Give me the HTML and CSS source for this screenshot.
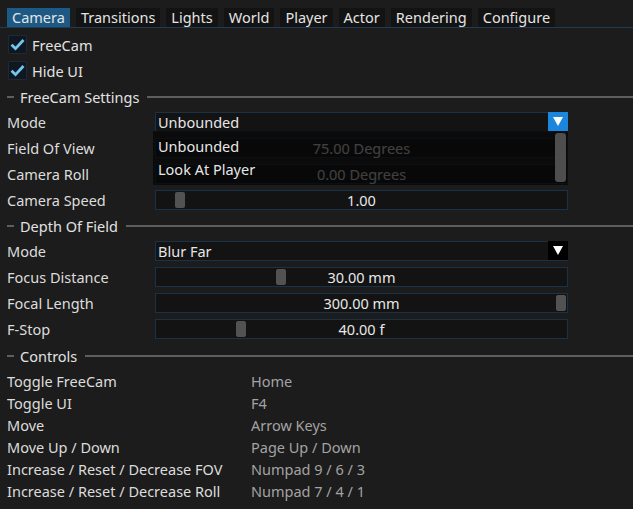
FILE: index.html
```html
<!DOCTYPE html>
<html>
<head>
<meta charset="utf-8">
<link rel="stylesheet" href="styles.css">
</head>
<body>
<div class="window">
  <div class="tabbar">
    <div class="tab active">Camera</div>
    <div class="tab">Transitions</div>
    <div class="tab">Lights</div>
    <div class="tab">World</div>
    <div class="tab">Player</div>
    <div class="tab">Actor</div>
    <div class="tab">Rendering</div>
    <div class="tab">Configure</div>
  </div>
  <div class="tabline"></div>

  <div class="content">
    <div class="check-row">
      <span class="checkbox"><svg width="15" height="13" viewBox="0 0 15 13"><path d="M1.5 6.8 L5.5 10.6 L13.5 2" fill="none" stroke="#74c7ec" stroke-width="2.8"/></svg></span>
      <span class="check-label">FreeCam</span>
    </div>
    <div class="check-row">
      <span class="checkbox"><svg width="15" height="13" viewBox="0 0 15 13"><path d="M1.5 6.8 L5.5 10.6 L13.5 2" fill="none" stroke="#74c7ec" stroke-width="2.8"/></svg></span>
      <span class="check-label">Hide UI</span>
    </div>

    <div class="section first"><span class="dash"></span><span class="section-title">FreeCam Settings</span><span class="rule"></span></div>

    <div class="form">
      <div class="row">
        <div class="label">Mode</div>
        <div class="frame combo">
          <span class="combo-text">Unbounded</span>
          <span class="arrow open"><svg width="10" height="9" viewBox="0 0 10 9"><path d="M0 0 H10 L5 9 Z" fill="#fff"/></svg></span>
          <div class="popup">
            <div class="popup-item">Unbounded</div>
            <div class="popup-item">Look At Player</div>
            <div class="scrollbar"></div>
          </div>
        </div>
      </div>
      <div class="row">
        <div class="label">Field Of View</div>
        <div class="frame slider"><span class="value">75.00 Degrees</span></div>
      </div>
      <div class="row">
        <div class="label">Camera Roll</div>
        <div class="frame slider"><span class="value">0.00 Degrees</span></div>
      </div>
      <div class="row">
        <div class="label">Camera Speed</div>
        <div class="frame slider"><span class="grab" style="left:19px"></span><span class="value">1.00</span></div>
      </div>
    </div>

    <div class="section"><span class="dash"></span><span class="section-title">Depth Of Field</span><span class="rule"></span></div>

    <div class="form">
      <div class="row">
        <div class="label">Mode</div>
        <div class="frame combo">
          <span class="combo-text">Blur Far</span>
          <span class="arrow"><svg width="10" height="9" viewBox="0 0 10 9"><path d="M0 0 H10 L5 9 Z" fill="#fff"/></svg></span>
        </div>
      </div>
      <div class="row">
        <div class="label">Focus Distance</div>
        <div class="frame slider"><span class="grab" style="left:120px"></span><span class="value">30.00 mm</span></div>
      </div>
      <div class="row">
        <div class="label">Focal Length</div>
        <div class="frame slider"><span class="grab" style="left:400px"></span><span class="value">300.00 mm</span></div>
      </div>
      <div class="row">
        <div class="label">F-Stop</div>
        <div class="frame slider"><span class="grab" style="left:80px"></span><span class="value">40.00 f</span></div>
      </div>
    </div>

    <div class="section controls-head"><span class="dash"></span><span class="section-title">Controls</span><span class="rule"></span></div>

    <div class="keys">
      <div class="key-row"><span class="key-name">Toggle FreeCam</span><span class="key-val">Home</span></div>
      <div class="key-row"><span class="key-name">Toggle UI</span><span class="key-val">F4</span></div>
      <div class="key-row"><span class="key-name">Move</span><span class="key-val">Arrow Keys</span></div>
      <div class="key-row"><span class="key-name">Move Up / Down</span><span class="key-val">Page Up / Down</span></div>
      <div class="key-row"><span class="key-name">Increase / Reset / Decrease FOV</span><span class="key-val">Numpad 9 / 6 / 3</span></div>
      <div class="key-row"><span class="key-name">Increase / Reset / Decrease Roll</span><span class="key-val">Numpad 7 / 4 / 1</span></div>
    </div>
  </div>
</div>
</body>
</html>
```

FILE: styles.css
```css
html, body {
  margin: 0;
  padding: 0;
  background: #1c1c1c;
}
body {
  width: 633px;
  height: 509px;
  overflow: hidden;
  font-family: "Noto Sans", "DejaVu Sans", sans-serif;
  font-size: 14.5px;
  color: #dcdcdc;
}
.window {
  padding-top: 8px;
}
.tabbar {
  display: flex;
  gap: 6px;
  padding-left: 7px;
  height: 19px;
}
.tab {
  background: #131313;
  color: #e4e4e4;
  padding: 0 5px;
  line-height: 18px;
  height: 19px;
}
.tab.active {
  background: #1c5a85;
}
.tabline {
  height: 1px;
  background: #1f3a52;
}
.content {
  padding-left: 7px;
  display: flex;
  flex-direction: column;
}
.check-row {
  display: flex;
  align-items: center;
  gap: 5px;
  height: 19px;
  margin-top: 7px;
}
.checkbox {
  width: 19px;
  height: 19px;
  margin-left: 1px;
  background: #0f1822;
  border: 1px solid #1c2a36;
  box-sizing: border-box;
  display: flex;
  align-items: center;
  justify-content: center;
  border-radius: 1px;
}
.check-label {
  color: #e2e2e2;
}
.section {
  display: flex;
  align-items: center;
  height: 20px;
  margin-top: 6px;
}
.section.first {
  margin-top: 7px;
}
.section.controls-head {
  margin-top: 7px;
}
.dash {
  width: 7px;
  height: 2px;
  background: #5e5e5e;
}
.section-title {
  margin-left: 6px;
  margin-right: 8px;
  color: #e2e2e2;
}
.rule {
  flex: 1;
  height: 2px;
  background: #5e5e5e;
}
.form {
  display: flex;
  flex-direction: column;
  gap: 6px;
  margin-top: 5px;
}
.row {
  display: flex;
  align-items: center;
  height: 20px;
}
.label {
  width: 148px;
  color: #dcdcdc;
}
.frame {
  position: relative;
  width: 413px;
  height: 20px;
  box-sizing: border-box;
  background: #131313;
  border: 1px solid #1a3248;
}
.combo {
  display: flex;
  align-items: center;
}
.combo-text {
  padding-left: 2px;
  flex: 1;
  color: #e6e6e6;
}
.arrow {
  width: 20px;
  height: 19px;
  margin-right: -1px;
  margin-top: -1px;
  background: #000;
  display: flex;
  align-items: center;
  justify-content: center;
}
.arrow.open {
  background: #1a86de;
}
.slider {
  display: flex;
  align-items: center;
  justify-content: center;
}
.value {
  color: #e8e8e8;
  position: relative;
}
.grab {
  position: absolute;
  top: 1px;
  width: 10px;
  height: 16px;
  border-radius: 2px;
  background: #525252;
}
.popup {
  position: absolute;
  left: -3px;
  top: 18px;
  width: 415px;
  height: 54px;
  box-sizing: border-box;
  background: rgba(5, 5, 5, 0.74);
  padding-top: 4px;
  padding-left: 5px;
  z-index: 5;
}
.popup-item {
  height: 23px;
  line-height: 23px;
  color: #e6e6e6;
}
.scrollbar {
  position: absolute;
  right: 2px;
  top: 2px;
  width: 11px;
  height: 49px;
  border-radius: 3px;
  background: #4e4e4e;
}
.keys {
  display: flex;
  flex-direction: column;
  margin-top: 4px;
}
.key-row {
  display: flex;
  height: 22px;
  align-items: center;
}
.key-name {
  width: 244px;
  color: #dcdcdc;
}
.key-val {
  color: #a3a3a3;
}
```
